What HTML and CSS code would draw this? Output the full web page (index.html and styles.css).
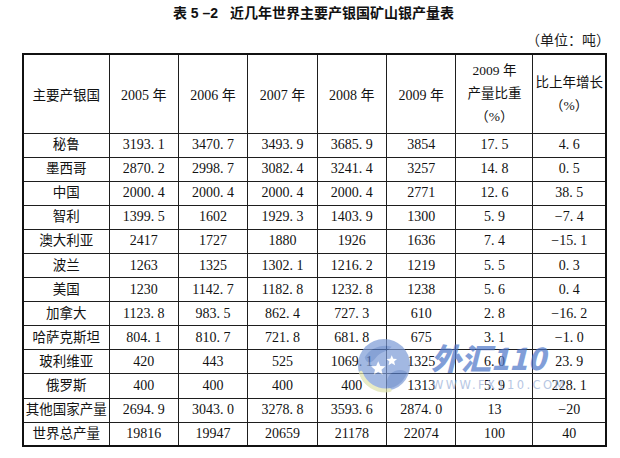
FILE: index.html
```html
<!DOCTYPE html>
<html lang="zh-CN">
<head>
<meta charset="utf-8">
<title>表5－2 近几年世界主要产银国矿山银产量表</title>
<link rel="stylesheet" href="styles.css">
</head>
<body>
<div class="sheet">
  <div class="title"><span class="t-no">表 5 –2</span>近几年世界主要产银国矿山银产量表</div>
  <div class="unit">（单位：吨）</div>
  <table class="grid">
    <colgroup>
      <col class="c-name"><col class="c-yr"><col class="c-yr"><col class="c-yr"><col class="c-yr"><col class="c-yr"><col class="c-share"><col class="c-growth">
    </colgroup>
    <thead>
      <tr class="head">
        <th>主要产银国</th>
        <th>2005 年</th>
        <th>2006 年</th>
        <th>2007 年</th>
        <th>2008 年</th>
        <th>2009 年</th>
        <th class="multi">2009 年<br>产量比重<br>（%）</th>
        <th class="multi">比上年增长<br>（%）</th>
      </tr>
    </thead>
    <tbody>
      <tr><td>秘鲁</td><td>3193. 1</td><td>3470. 7</td><td>3493. 9</td><td>3685. 9</td><td>3854</td><td>17. 5</td><td>4. 6</td></tr>
      <tr><td>墨西哥</td><td>2870. 2</td><td>2998. 7</td><td>3082. 4</td><td>3241. 4</td><td>3257</td><td>14. 8</td><td>0. 5</td></tr>
      <tr><td>中国</td><td>2000. 4</td><td>2000. 4</td><td>2000. 4</td><td>2000. 4</td><td>2771</td><td>12. 6</td><td>38. 5</td></tr>
      <tr><td>智利</td><td>1399. 5</td><td>1602</td><td>1929. 3</td><td>1403. 9</td><td>1300</td><td>5. 9</td><td>−7. 4</td></tr>
      <tr><td>澳大利亚</td><td>2417</td><td>1727</td><td>1880</td><td>1926</td><td>1636</td><td>7. 4</td><td>−15. 1</td></tr>
      <tr><td>波兰</td><td>1263</td><td>1325</td><td>1302. 1</td><td>1216. 2</td><td>1219</td><td>5. 5</td><td>0. 3</td></tr>
      <tr><td>美国</td><td>1230</td><td>1142. 7</td><td>1182. 8</td><td>1232. 8</td><td>1238</td><td>5. 6</td><td>0. 4</td></tr>
      <tr><td>加拿大</td><td>1123. 8</td><td>983. 5</td><td>862. 4</td><td>727. 3</td><td>610</td><td>2. 8</td><td>−16. 2</td></tr>
      <tr><td>哈萨克斯坦</td><td>804. 1</td><td>810. 7</td><td>721. 8</td><td>681. 8</td><td>675</td><td>3. 1</td><td>−1. 0</td></tr>
      <tr><td>玻利维亚</td><td>420</td><td>443</td><td>525</td><td>1069. 1</td><td>1325</td><td>6. 0</td><td>23. 9</td></tr>
      <tr><td>俄罗斯</td><td>400</td><td>400</td><td>400</td><td>400</td><td>1313</td><td>5. 9</td><td>228. 1</td></tr>
      <tr><td>其他国家产量</td><td>2694. 9</td><td>3043. 0</td><td>3278. 8</td><td>3593. 6</td><td>2874. 0</td><td>13</td><td>−20</td></tr>
      <tr><td>世界总产量</td><td>19816</td><td>19947</td><td>20659</td><td>21178</td><td>22074</td><td>100</td><td>40</td></tr>
    </tbody>
  </table>

  <div class="watermark" aria-hidden="true">
    <svg class="wm-globe" viewBox="0 0 60 60" width="58" height="58">
      <circle cx="30" cy="30" r="27" fill="#7c9bd6"/>
      <path d="M10 22 C16 12 28 8 38 11 C34 16 26 16 22 22 C18 28 12 30 10 22 Z" fill="#557bc4"/>
      <path d="M36 40 C42 34 50 34 54 38 C50 48 42 54 34 54 C32 48 33 44 36 40 Z" fill="#557bc4"/>
      <path d="M24 26 l2.2 5 5.3 .4 -4.1 3.4 1.3 5.2 -4.7 -2.9 -4.6 2.9 1.3 -5.2 -4.1 -3.4 5.3 -.4 Z" fill="#ffffff"/>
      <path d="M38 20 l1.6 3.6 3.9 .3 -3 2.5 1 3.8 -3.5 -2.1 -3.4 2.1 1 -3.8 -3 -2.5 3.9 -.3 Z" fill="#ffffff"/>
      <path d="M6 38 C10 50 22 58 36 56" fill="none" stroke="#dfe3ad" stroke-width="4" stroke-linecap="round"/>
    </svg>
    <div class="wm-name">外汇110</div>
    <div class="wm-url">WWW.FX110.COM</div>
  </div>
</div>
</body>
</html>
```

FILE: styles.css
```css
html, body {
  margin: 0;
  padding: 0;
  background: #ffffff;
}

body {
  color: #121212;
  font-family: "Liberation Serif", "Noto Sans CJK SC", serif;
}

.sheet {
  position: relative;
  margin-left: 22px;
  width: 583px;
}

.title {
  height: 26px;
  line-height: 24px;
  padding-left: 0;
  text-align: center;
  font-family: "Noto Sans CJK SC", sans-serif;
  font-weight: 700;
  font-size: 14px;
  color: #111111;
}

.t-no {
  margin-right: 12px;
  font-family: "Liberation Sans", "Noto Sans CJK SC", sans-serif;
  font-weight: 700;
}

.unit {
  height: 27px;
  line-height: 26px;
  text-align: right;
  font-family: "Noto Sans CJK SC", sans-serif;
  font-size: 14px;
  color: #1c1c1c;
  margin-right: -5px;
}

.grid {
  width: 583px;
  table-layout: fixed;
  border-collapse: collapse;
  border: 2px solid #111111;
}

.c-name { width: 86px; }
.c-yr { width: 69.4px; }
.c-share { width: 77px; }
.c-growth { width: 73px; }

.grid th,
.grid td {
  border: 1px solid #1e1e1e;
  padding: 0;
  text-align: center;
  vertical-align: middle;
  font-size: 14px;
  font-weight: 400;
  white-space: nowrap;
}

.grid td:first-child,
.grid th:first-child {
  font-size: 13.5px;
}

.head {
  height: 79px;
}

.grid th.multi {
  line-height: 23px;
  font-size: 13.5px;
}

.grid tbody tr {
  height: 24.1px;
}

.grid tbody td {
  line-height: 20px;
}

.watermark {
  position: absolute;
  left: 333px;
  top: 336px;
  width: 230px;
  height: 60px;
  opacity: 0.7;
  pointer-events: none;
}

.wm-globe {
  position: absolute;
  left: 0;
  top: 0;
}

.wm-name {
  position: absolute;
  left: 76px;
  top: 5px;
  font-family: "Noto Sans CJK SC", sans-serif;
  font-weight: 900;
  font-style: italic;
  font-size: 30px;
  line-height: 32px;
  color: #4d76c8;
}

.wm-url {
  position: absolute;
  left: 77px;
  top: 42px;
  font-family: "DejaVu Sans", sans-serif;
  font-size: 11.5px;
  line-height: 14px;
  letter-spacing: 2.4px;
  color: #9ab0d8;
}
```
